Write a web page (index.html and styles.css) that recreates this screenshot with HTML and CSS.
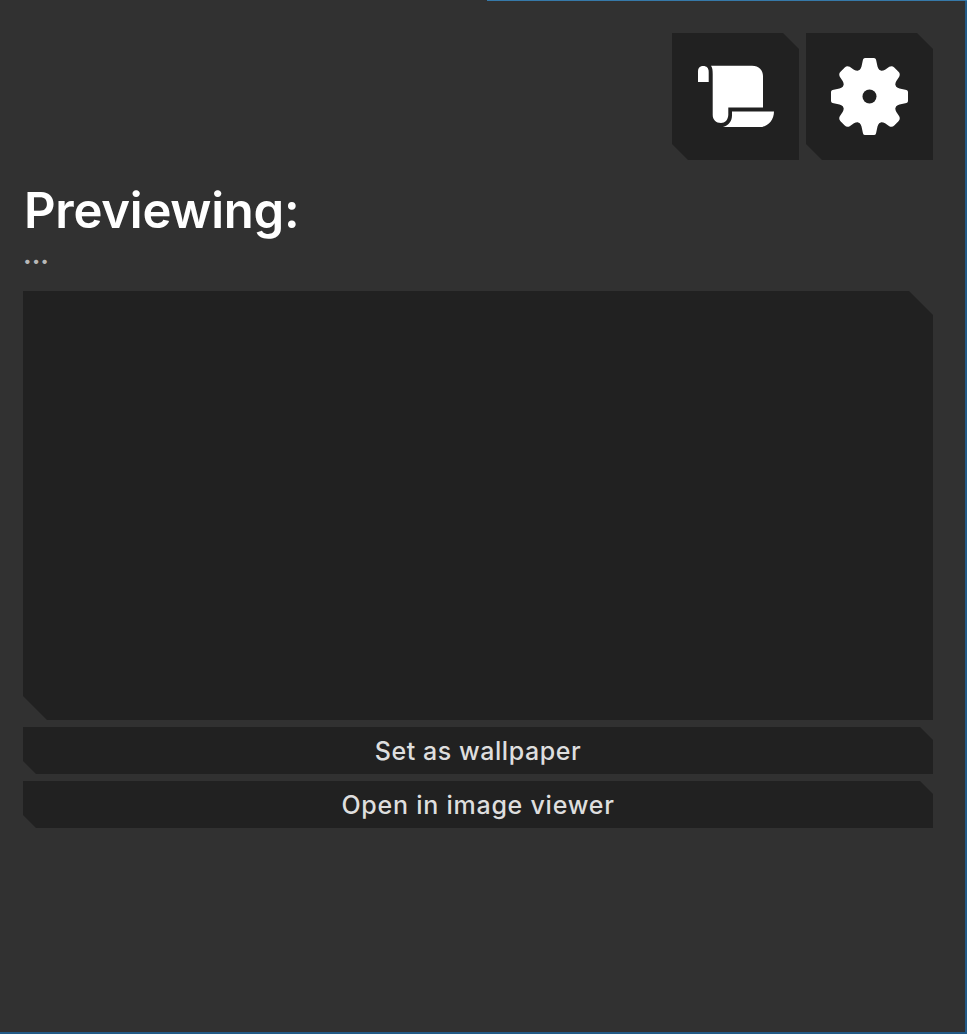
FILE: index.html
```html
<!DOCTYPE html>
<html lang="en">
<head>
<meta charset="utf-8">
<title>Preview</title>
<link rel="stylesheet" href="styles.css">
</head>
<body>
<main class="window">
  <nav class="toolbar">
    <button class="tool" aria-label="Log">
      <svg width="127" height="127" viewBox="0 0 127 127" fill="#fff">
        <path d="M26 49V38.500C26 34.500 28.300 33 31.300 33C34.600 33 36.700 35 36.700 39V49Z"/>
        <path d="M39 32.700H80C87 32.700 91 37.500 91 43V74.500H56.300V82C56 87 53 90 49 90C44 90 40.700 86.500 40.700 82V41C40.700 37 40.500 35 39 32.700Z"/>
        <path d="M60 78.500H102C102 87 96 94 88 94H51C57 92 60 88 60 82Z"/>
      </svg>
    </button>
    <button class="tool" aria-label="Settings">
      <svg width="127" height="127" viewBox="0 0 127 127">
        <g fill="#fff" transform="translate(63.500 63.500)">
          <circle r="27.500"/>
          <g id="teeth">
            <path id="tooth" d="M-13 -25Q-9 -26 -8 -30L-6.500 -37Q-6 -38.500 -4.500 -38.500H4.500Q6 -38.500 6.500 -37L8 -30Q9 -26 13 -25V-18H-13Z"/>
            <use href="#tooth" transform="rotate(90)"/>
            <use href="#tooth" transform="rotate(180)"/>
            <use href="#tooth" transform="rotate(270)"/>
          </g>
          <g transform="rotate(45)">
            <path id="round-tooth" d="M-13 -25Q-9 -26 -8 -30L-7 -35Q-6 -38 -3 -38H3Q6 -38 7 -35L8 -30Q9 -26 13 -25V-18H-13Z"/>
            <use href="#round-tooth" transform="rotate(90)"/>
            <use href="#round-tooth" transform="rotate(180)"/>
            <use href="#round-tooth" transform="rotate(270)"/>
          </g>
          <circle r="7" fill="#212121"/>
        </g>
      </svg>
    </button>
  </nav>
  <h1 class="title">Previewing:</h1>
  <p class="file">...</p>
  <section class="preview"></section>
  <button class="action wallpaper">Set as wallpaper</button>
  <button class="action viewer">Open in image viewer</button>
</main>
<div class="top-edge"></div>
</body>
</html>
```
FILE: styles.css
```css
* { box-sizing: border-box; }
body { margin: 0; background: #313131; font-family: Inter, "Liberation Sans", sans-serif; }
button { border: 0; font: inherit; }
.window {
  height: 1034px;
  padding: 33px 32px 0 23px;
  border-right: 2px solid #225b88;
  border-bottom: 2px solid #225b88;
  display: flex;
  flex-direction: column;
}
.top-edge { position: absolute; top: 0; left: 487px; right: 0; height: 1px; background: #3679a9; }
.toolbar { display: flex; justify-content: flex-end; gap: 7px; }
.tool, .preview, .action {
  background: #212121;
  clip-path: polygon(0 0, calc(100% - var(--cut)) 0, 100% var(--cut), 100% 100%, var(--cut) 100%, 0 calc(100% - var(--cut)));
}
.tool { --cut: 16px; width: 127px; height: 127px; padding: 0; }
.tool svg { display: block; }
.title { margin: 20px 0 0; padding-left: 1px; height: 60px; line-height: 61px; font-size: 49px; font-weight: 600; letter-spacing: -0.25px; color: #fff; white-space: nowrap; }
.file { margin: 0; height: 51px; line-height: 30px; font-size: 26px; font-weight: 700; color: #b8b8b8; }
.preview, .action { flex: none; }
.preview { --cut: 24px; height: 429px; }
.action {
  --cut: 13px;
  height: 47px;
  margin-top: 7px;
  padding: 0;
  line-height: 49px;
  font-size: 25px;
  font-weight: 500;
  color: #dedede;
}
.wallpaper { letter-spacing: 0.55px; }
.viewer { letter-spacing: 0.75px; }
```
